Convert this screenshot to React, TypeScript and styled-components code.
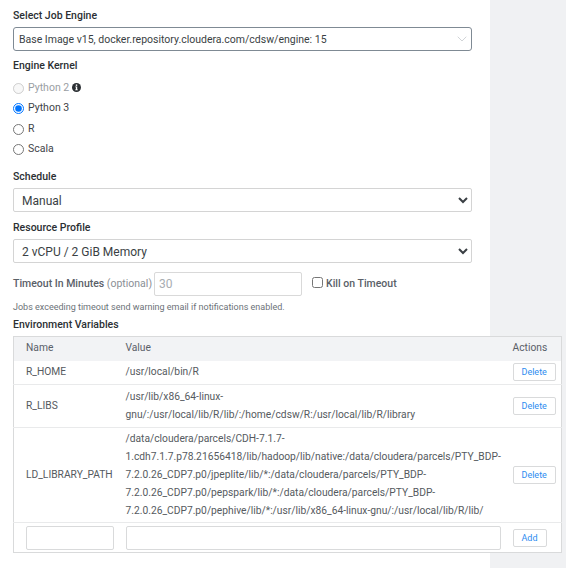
import styled, { createGlobalStyle } from 'styled-components'
import { ChevronDown } from 'lucide-react'

const GlobalStyle = createGlobalStyle`
	html, body {
		margin: 0;
		padding: 0;
		background: #fff;
	}
	body {
		font-family: Roboto, 'Liberation Sans', sans-serif;
		font-size: 10.5px;
		color: #333;
	}
`

const Page = styled.div`
	width: 566px;
	height: 568px;
	overflow: hidden;
	background: #f0f1f3;
`

const Main = styled.main`
	box-sizing: border-box;
	width: 490px;
	height: 100%;
	padding: 8px 18px 0 13px;
	background: #fff;
`

const Field = styled.div<{ $gap?: number }>`
	margin-bottom: ${(p) => p.$gap ?? 8}px;
`

const Label = styled.div`
	font-weight: 500;
	font-size: 10.5px;
	line-height: 14px;
	color: #2b2f33;
	padding-top: 1px;
	margin-bottom: 4px;
`

const EngineSelect = styled.div`
	box-sizing: border-box;
	height: 24px;
	border: 1px solid #7f8a94;
	border-radius: 3px;
	display: flex;
	align-items: center;
	justify-content: space-between;
	padding: 0 1px 0 5px;
	color: #3a3f44;
	background: #fff;
	svg {
		color: #b9bec3;
	}
`

const NativeSelect = styled.select`
	display: block;
	width: 100%;
	height: 24px;
	border: 1px solid #d4d4d4;
	border-radius: 2px;
	background: #fff;
	font-family: inherit;
	font-size: 12px;
	color: #3a3f44;
	padding: 1px 4px 0;
`

const RadioRow = styled.label<{ $disabled?: boolean }>`
	display: flex;
	align-items: center;
	height: 20.5px;
	color: ${(p) => (p.$disabled ? '#9a9ea3' : '#3f4449')};
	input {
		width: 11px;
		height: 11px;
		margin: 2px 4px 0 0;
	}
	svg {
		margin-left: 3px;
		color: #2b2f33;
	}
`

const TimeoutRow = styled.div`
	display: flex;
	align-items: center;
	height: 24px;
`

const TimeoutLabel = styled.span`
	font-weight: 500;
	color: #5a6068;
	margin: -1px 2px 0 0;
	small {
		font-size: 10.5px;
		font-weight: 400;
		color: #8a8f95;
	}
`

const TimeoutInput = styled.input`
	box-sizing: border-box;
	width: 148px;
	height: 24px;
	border: 1px solid #d9d9d9;
	border-radius: 2px;
	font-family: inherit;
	font-size: 12px;
	padding: 0 4px;
	&::placeholder {
		color: #a8adb2;
	}
`

const KillLabel = styled.label`
	display: flex;
	align-items: center;
	margin: -1px 0 0 10px;
	font-weight: 500;
	color: #5a6068;
	input {
		width: 11px;
		height: 11px;
		margin: -3px 3px 0 0;
	}
`

const Hint = styled.div`
	font-size: 9px;
	line-height: 12px;
	color: #6c7278;
	margin: 5px 0 4px;
`

const EnvTable = styled.table`
	width: 549px;
	table-layout: fixed;
	border-collapse: collapse;
	border: 1px solid #d9dadb;
	background: #fff;
	font-size: 10.25px;
	line-height: 18px;
	color: #555a60;

	th {
		background: #f2f3f5;
		font-weight: 400;
		text-align: left;
		height: 24px;
		padding: 0 0 1px 12px;
		box-sizing: border-box;
		color: #5a6068;
	}
	td {
		padding: 0 0 0 12px;
		border-top: 1px solid #e9eaeb;
	}
	tbody tr:first-child td {
		border-top: 0;
	}
	col:nth-child(1) {
		width: 100px;
	}
	col:nth-child(2) {
		width: 387px;
	}
`

const ActionButton = styled.button`
	display: block;
	box-sizing: border-box;
	height: 18px;
	padding: 0 8px;
	border: 1px solid #d9dadb;
	border-radius: 2px;
	background: #fff;
	font-family: inherit;
	font-size: 9px;
	color: #2d8cf0;
`

const CellInput = styled.input`
	display: block;
	box-sizing: border-box;
	width: 100%;
	height: 24px;
	border: 1px solid #d9dadb;
	border-radius: 2px;
	background: #fff;
`

const envVars = [
	{ name: 'R_HOME', value: '/usr/local/bin/R', height: 24 },
	{
		name: 'R_LIBS',
		value: '/usr/lib/x86_64-linux-gnu/:/usr/local/lib/R/lib/:/home/cdsw/R:/usr/local/lib/R/library',
		height: 43,
	},
	{
		name: 'LD_LIBRARY_PATH',
		value:
			'/data/cloudera/parcels/CDH-7.1.7-1.cdh7.1.7.p78.21656418/lib/hadoop/lib/native:/data/cloudera/parcels/PTY_BDP-7.2.0.26_CDP7.p0/jpeplite/lib/*:/data/cloudera/parcels/PTY_BDP-7.2.0.26_CDP7.p0/pepspark/lib/*:/data/cloudera/parcels/PTY_BDP-7.2.0.26_CDP7.p0/pephive/lib/*:/usr/lib/x86_64-linux-gnu/:/usr/local/lib/R/lib/',
		height: 95,
	},
]

function InfoIcon() {
	return (
		<svg width="9" height="9" viewBox="0 0 10 10">
			<circle cx="5" cy="5" r="5" fill="currentColor" />
			<rect x="4.2" y="1.6" width="1.6" height="1.6" fill="#fff" />
			<path d="M3.6 4h2.2v3.2h.7V8H3.5v-.8h.8V4.8h-.7z" fill="#fff" />
		</svg>
	)
}

export default function App() {
	return (
		<Page>
			<GlobalStyle />
			<Main>
				<Field $gap={7}>
					<Label>Select Job Engine</Label>
					<EngineSelect>
						Base Image v15, docker.repository.cloudera.com/cdsw/engine: 15
						<ChevronDown size={16} strokeWidth={1} />
					</EngineSelect>
				</Field>
				<Field $gap={10}>
					<Label>Engine Kernel</Label>
					<RadioRow $disabled>
						<input type="radio" name="kernel" disabled />
						Python 2
						<InfoIcon />
					</RadioRow>
					<RadioRow>
						<input type="radio" name="kernel" defaultChecked />
						Python 3
					</RadioRow>
					<RadioRow>
						<input type="radio" name="kernel" />R
					</RadioRow>
					<RadioRow>
						<input type="radio" name="kernel" />
						Scala
					</RadioRow>
				</Field>
				<Field>
					<Label>Schedule</Label>
					<NativeSelect defaultValue="Manual">
						<option>Manual</option>
					</NativeSelect>
				</Field>
				<Field $gap={9}>
					<Label>Resource Profile</Label>
					<NativeSelect defaultValue="2 vCPU / 2 GiB Memory">
						<option>2 vCPU / 2 GiB Memory</option>
					</NativeSelect>
				</Field>
				<TimeoutRow>
					<TimeoutLabel>
						Timeout In Minutes <small>(optional)</small>
					</TimeoutLabel>
					<TimeoutInput placeholder="30" />
					<KillLabel>
						<input type="checkbox" />
						Kill on Timeout
					</KillLabel>
				</TimeoutRow>
				<Hint>Jobs exceeding timeout send warning email if notifications enabled.</Hint>
				<Label>Environment Variables</Label>
				<EnvTable>
					<colgroup>
						<col />
						<col />
						<col />
					</colgroup>
					<thead>
						<tr>
							<th>Name</th>
							<th>Value</th>
							<th>Actions</th>
						</tr>
					</thead>
					<tbody>
						{envVars.map((env) => (
							<tr key={env.name} style={{ height: env.height }}>
								<td>{env.name}</td>
								<td>{env.value}</td>
								<td>
									<ActionButton>Delete</ActionButton>
								</td>
							</tr>
						))}
						<tr style={{ height: 30 }}>
							<td>
								<CellInput />
							</td>
							<td>
								<CellInput />
							</td>
							<td>
								<ActionButton>Add</ActionButton>
							</td>
						</tr>
					</tbody>
				</EnvTable>
			</Main>
		</Page>
	)
}
